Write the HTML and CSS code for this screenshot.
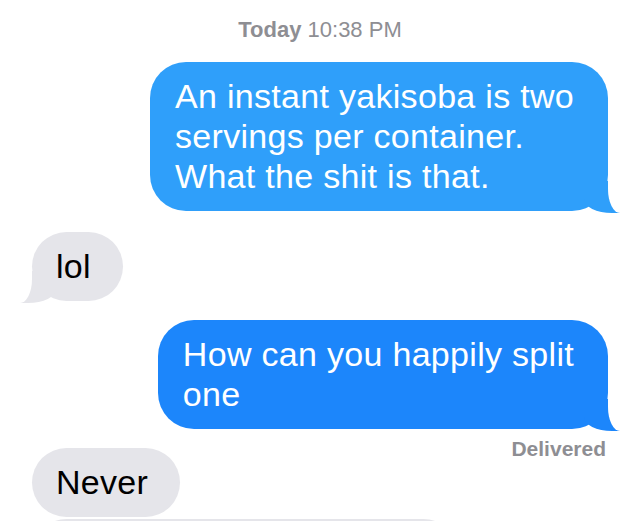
FILE: index.html
```html
<!DOCTYPE html>
<html lang="en">
<head>
    <meta charset="UTF-8">
    <meta name="viewport" content="width=device-width, initial-scale=1.0">
    <title>Messages</title>
    <link rel="stylesheet" href="styles.css">
</head>
<body>
    <div class="thread">
        <div class="timestamp"><b>Today</b> 10:38 PM</div>

        <div class="row sent first">
            <div class="bubble blue-light tail">An instant yakisoba is two<br>servings per container.<br>What the shit is that.</div>
        </div>

        <div class="row received gap">
            <div class="bubble gray tail">lol</div>
        </div>

        <div class="row sent gap-small">
            <div class="bubble blue tail">How can you happily split<br>one</div>
        </div>
        <div class="status">Delivered</div>

        <div class="row received under-status">
            <div class="bubble gray">Never</div>
        </div>

        <div class="row received stacked">
            <div class="bubble gray cut"></div>
        </div>
    </div>
</body>
</html>
```

FILE: styles.css
```css
html, body {
    margin: 0;
    height: 521px;
    overflow: hidden;
    background-color: white;
}

body {
    font-family: "Liberation Sans", Arial, sans-serif;
}

.thread {
    display: flex;
    flex-direction: column;
    padding: 0 32px;
}

.timestamp {
    padding-top: 19px;
    text-align: center;
    font-size: 22px;
    line-height: 22px;
    color: #8e8e93;
}

.row {
    display: flex;
}

.row.sent {
    justify-content: flex-end;
}

.row.received {
    justify-content: flex-start;
}

.first {
    margin-top: 21px;
}

.gap {
    margin-top: 21px;
}

.gap-small {
    margin-top: 19px;
}

.under-status {
    margin-top: -12px;
}

.stacked {
    margin-top: 2px;
}

.bubble {
    position: relative;
    padding: 14px 34px 15px 25px;
    border-radius: 36px;
    font-size: 34px;
    line-height: 40px;
    letter-spacing: 0.3px;
}

.received .bubble {
    padding-left: 24px;
    padding-right: 32px;
}

.blue-light {
    background-color: #2f9ffa;
    color: white;
}

.blue {
    background-color: #1c86fb;
    color: white;
}

.gray {
    background-color: #e5e5ea;
    color: black;
}

.cut {
    width: 370px;
    height: 40px;
}

/* tails */
.bubble.tail::before,
.bubble.tail::after {
    content: "";
    position: absolute;
    bottom: -2px;
}

.sent .bubble.tail::before {
    right: -12px;
    width: 36px;
    height: 32px;
    background-color: inherit;
    border-bottom-left-radius: 28px 14px;
}

.sent .bubble.tail::after {
    right: -28px;
    width: 28px;
    height: 34px;
    background-color: white;
    border-bottom-left-radius: 12px 24px;
}

.received .bubble.tail::before {
    left: -12px;
    width: 36px;
    height: 32px;
    background-color: inherit;
    border-bottom-right-radius: 28px 14px;
}

.received .bubble.tail::after {
    left: -28px;
    width: 28px;
    height: 34px;
    background-color: white;
    border-bottom-right-radius: 12px 24px;
}

.status {
    margin-top: 9px;
    text-align: right;
    font-size: 21px;
    font-weight: bold;
    line-height: 22px;
    color: #8e8e93;
    padding-right: 2px;
}
```
